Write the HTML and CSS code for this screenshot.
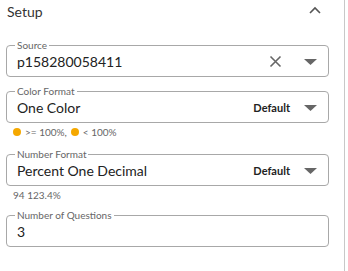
FILE: index.html
```html
<!DOCTYPE html>
<html>
<head>
<meta charset="utf-8">
<link rel="stylesheet" href="styles.css">
</head>
<body>
<div class="panel">
  <div class="header">
    <span class="title">Setup</span>
    <svg class="chev" width="12" height="8" viewBox="0 0 12 8"><path d="M1 7 L6 2 L11 7" fill="none" stroke="#555" stroke-width="1.6"/></svg>
  </div>
  <div class="fields">
    <div class="group">
      <fieldset class="field">
        <legend>Source</legend>
        <div class="row">
          <span class="value">p158280058411</span>
          <svg class="clear" width="13" height="13" viewBox="0 0 13 13"><path d="M1.5 1.5 L11.5 11.5 M11.5 1.5 L1.5 11.5" stroke="#666" stroke-width="1.6"/></svg>
          <svg class="caret" width="13" height="6" viewBox="0 0 13 6"><path d="M0 0 H13 L6.5 6 Z" fill="#666"/></svg>
        </div>
      </fieldset>
    </div>
    <div class="group">
      <fieldset class="field">
        <legend>Color Format</legend>
        <div class="row">
          <span class="value">One Color</span>
          <span class="tag">Default</span>
          <svg class="caret" width="13" height="6" viewBox="0 0 13 6"><path d="M0 0 H13 L6.5 6 Z" fill="#666"/></svg>
        </div>
      </fieldset>
      <div class="help help-dots"><span class="dot"></span>&gt;= 100%, <span class="dot dot2"></span>&lt; 100%</div>
    </div>
    <div class="group">
      <fieldset class="field">
        <legend>Number Format</legend>
        <div class="row">
          <span class="value">Percent One Decimal</span>
          <span class="tag">Default</span>
          <svg class="caret" width="13" height="6" viewBox="0 0 13 6"><path d="M0 0 H13 L6.5 6 Z" fill="#666"/></svg>
        </div>
      </fieldset>
      <div class="help">94 123.4%</div>
    </div>
    <div class="group">
      <fieldset class="field">
        <legend>Number of Questions</legend>
        <div class="row">
          <span class="value">3</span>
        </div>
      </fieldset>
    </div>
  </div>
</div>
</body>
</html>
```
FILE: styles.css
```css
html, body {
  margin: 0;
  padding: 0;
  background: #fff;
}
body {
  font-family: "Lato", "Liberation Sans", sans-serif;
  color: #222;
}
.panel {
  width: 344px;
  height: 271px;
  border-right: 1px solid #c8c8c8;
  box-sizing: content-box;
}
.header {
  display: flex;
  align-items: center;
  justify-content: space-between;
  height: 23px;
  padding: 0 23px 0 7px;
}
.title {
  font-size: 14px;
  color: #333;
}
.chev {
  display: block;
  margin-top: -3px;
}
.fields {
  display: flex;
  flex-direction: column;
  padding: 17px 15px 0 6px;
}
.group {
  display: flex;
  flex-direction: column;
  margin-bottom: 9px;
}
.field {
  margin: 0;
  padding: 0 10px 0 10px;
  border: 1px solid #a8a8a8;
  border-radius: 4px;
  height: 37px;
  box-sizing: border-box;
  min-width: 0;
}
.field legend {
  font-size: 10px;
  color: #666;
  padding: 0 2px;
  margin-left: -2px;
  line-height: 10px;
}
.row {
  display: flex;
  align-items: center;
  height: 23px;
}
.value {
  flex: 1;
  font-size: 14px;
  color: #222;
}
.clear {
  margin-right: 22px;
}
.caret {
  margin-right: 1px;
}
.tag {
  font-size: 11px;
  font-weight: bold;
  color: #222;
  margin-right: 14px;
}
.help {
  font-size: 10px;
  line-height: 12px;
  color: #666;
  padding: 3px 0 0 7px;
  display: flex;
  align-items: center;
}
.help-dots {
  padding-bottom: 2px;
}
.dot {
  width: 8px;
  height: 8px;
  border-radius: 50%;
  background: #f5a800;
  display: inline-block;
  margin-right: 4px;
}
.dot2 {
  margin-left: 4px;
}
```
